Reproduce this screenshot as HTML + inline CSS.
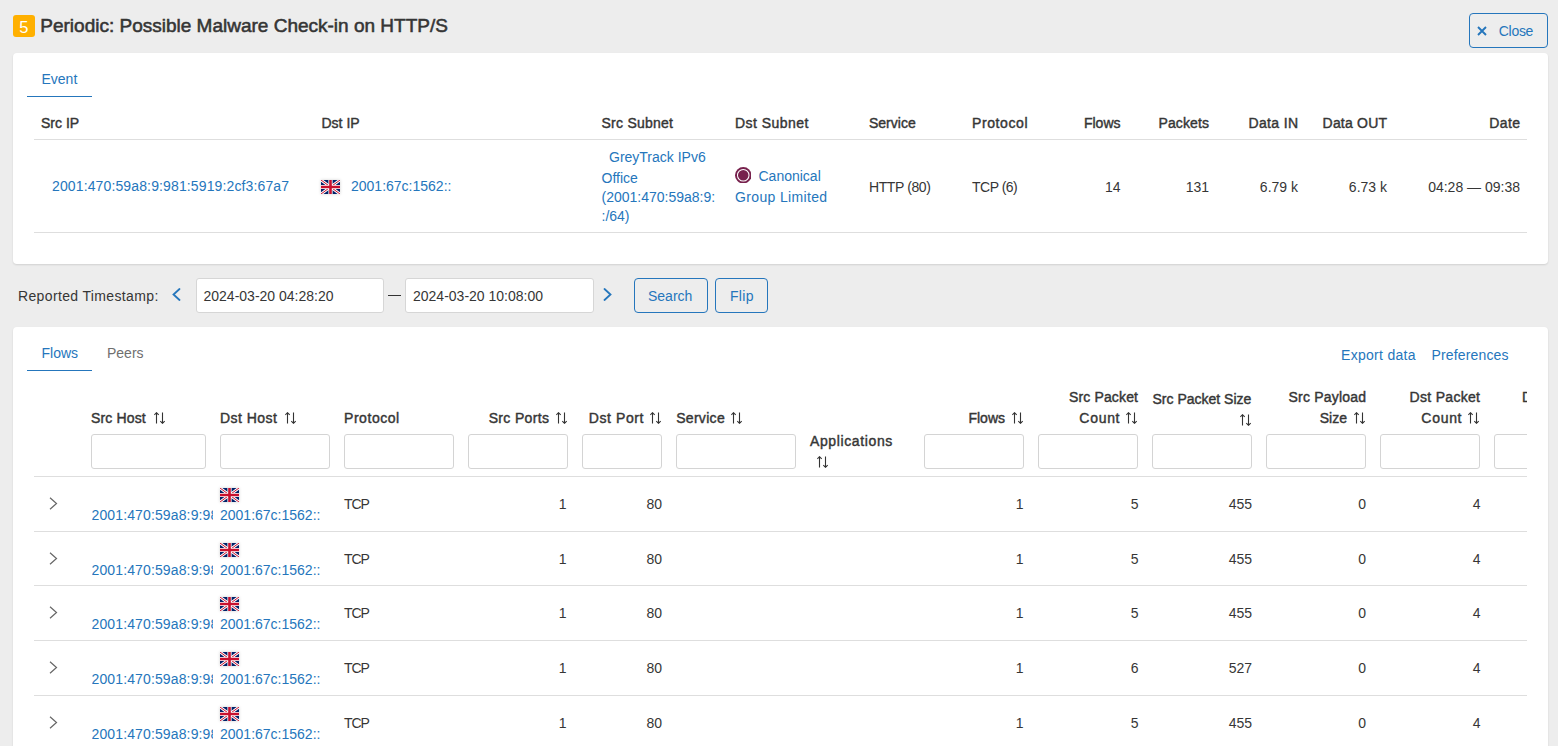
<!DOCTYPE html>
<html><head><meta charset="utf-8"><title>Event detail</title>
<style>
html,body{margin:0;padding:0;}
body{width:1558px;height:746px;overflow:hidden;position:relative;background:#ededed;font-family:"Liberation Sans",sans-serif;}
.t{position:absolute;white-space:nowrap;}
svg{display:block}
</style></head><body>
<div style="position:absolute;left:13px;top:15px;width:22px;height:22px;background:#ffb000;border-radius:3px;"></div>
<div class="t" style="top:16.18px;font-size:16.5px;line-height:22px;color:#fff;left:19.2px;">5</div>
<div class="t" style="top:14.32px;font-size:19px;line-height:24px;color:#353535;left:40.3px;-webkit-text-stroke:0.55px #353535;">Periodic: Possible Malware Check-in on HTTP/S</div>
<div style="position:absolute;left:1469px;top:13px;width:77px;height:33px;border:1px solid #2576bc;border-radius:4px;"></div>
<svg style="position:absolute;left:1477px;top:25.5px" width="10" height="10" viewBox="0 0 10 10"><path d="M1 1L9 9M9 1L1 9" stroke="#2576bc" stroke-width="1.9"/></svg>
<div class="t" style="top:21.15px;font-size:14px;line-height:20px;color:#2576bc;letter-spacing:-0.3px;left:1498.8px;">Close</div>
<div style="position:absolute;left:13px;top:53px;width:1535px;height:211px;background:#fff;border-radius:4px;box-shadow:0 1px 2px rgba(0,0,0,0.12);"></div>
<div class="t" style="top:69.15px;font-size:14px;line-height:20px;color:#2576bc;left:41.5px;">Event</div>
<div style="position:absolute;left:27px;top:95.5px;width:65px;height:1.6px;background:#2576bc;"></div>
<div class="t" style="top:113.15px;font-size:14px;line-height:20px;color:#363636;-webkit-text-stroke:0.42px #363636;left:41px;">Src IP</div>
<div class="t" style="top:113.15px;font-size:14px;line-height:20px;color:#363636;-webkit-text-stroke:0.42px #363636;left:321.5px;">Dst IP</div>
<div class="t" style="top:113.15px;font-size:14px;line-height:20px;color:#363636;-webkit-text-stroke:0.42px #363636;letter-spacing:0.25px;left:601.5px;">Src Subnet</div>
<div class="t" style="top:113.15px;font-size:14px;line-height:20px;color:#363636;-webkit-text-stroke:0.42px #363636;letter-spacing:0.45px;left:735px;">Dst Subnet</div>
<div class="t" style="top:113.15px;font-size:14px;line-height:20px;color:#363636;-webkit-text-stroke:0.42px #363636;left:869px;">Service</div>
<div class="t" style="top:113.15px;font-size:14px;line-height:20px;color:#363636;-webkit-text-stroke:0.42px #363636;letter-spacing:0.6px;left:972px;">Protocol</div>
<div class="t" style="top:113.15px;font-size:14px;line-height:20px;color:#363636;-webkit-text-stroke:0.42px #363636;right:437.5px;">Flows</div>
<div class="t" style="top:113.15px;font-size:14px;line-height:20px;color:#363636;-webkit-text-stroke:0.42px #363636;letter-spacing:0.12px;right:348.88px;">Packets</div>
<div class="t" style="top:113.15px;font-size:14px;line-height:20px;color:#363636;-webkit-text-stroke:0.42px #363636;letter-spacing:0.35px;right:259.65px;">Data IN</div>
<div class="t" style="top:113.15px;font-size:14px;line-height:20px;color:#363636;-webkit-text-stroke:0.42px #363636;letter-spacing:0.2px;right:170.8px;">Data OUT</div>
<div class="t" style="top:113.15px;font-size:14px;line-height:20px;color:#363636;-webkit-text-stroke:0.42px #363636;letter-spacing:0.4px;right:37.6px;">Date</div>
<div style="position:absolute;left:34px;top:139px;width:1493px;height:1px;background:#dedede;"></div>
<div class="t" style="top:175.95px;font-size:14px;line-height:20px;color:#2576bc;left:52px;letter-spacing:0.13px;">2001:470:59a8:9:981:5919:2cf3:67a7</div>
<div style="position:absolute;left:321px;top:180px;width:19px;height:14px;box-shadow:0 0 3px rgba(0,0,0,0.18);line-height:0"><svg width="19" height="14" viewBox="0 0 19 14"><rect width="19" height="14" fill="#012169"/><path d="M0 0L19 14M19 0L0 14" stroke="#fff" stroke-width="2.8"/><path d="M0 0L19 14M19 0L0 14" stroke="#C8102E" stroke-width="1"/><path d="M9.5 0V14M0 7H19" stroke="#fff" stroke-width="4.2"/><path d="M9.5 0V14M0 7H19" stroke="#C8102E" stroke-width="2.6"/></svg></div>
<div class="t" style="top:175.95px;font-size:14px;line-height:20px;color:#2576bc;left:351px;">2001:67c:1562::</div>
<div class="t" style="top:146.65px;font-size:14px;line-height:20px;color:#2576bc;left:609px;">GreyTrack IPv6</div>
<div class="t" style="top:167.65px;font-size:14px;line-height:20px;color:#2576bc;left:601.5px;">Office</div>
<div class="t" style="top:186.65px;font-size:14px;line-height:20px;color:#2576bc;left:601.5px;">(2001:470:59a8:9:</div>
<div class="t" style="top:205.65px;font-size:14px;line-height:20px;color:#2576bc;left:601.5px;">:/64)</div>
<svg style="position:absolute;left:734.5px;top:166.5px" width="16.5" height="16.5" viewBox="0 0 16 16"><circle cx="8" cy="8" r="8" fill="#77214d"/><circle cx="8" cy="8" r="5.6" fill="none" stroke="#fff" stroke-width="1"/></svg>
<div class="t" style="top:165.65px;font-size:14px;line-height:20px;color:#2576bc;left:758.5px;">Canonical</div>
<div class="t" style="top:186.65px;font-size:14px;line-height:20px;color:#2576bc;left:735px;letter-spacing:0.35px;">Group Limited</div>
<div class="t" style="top:176.95px;font-size:14px;line-height:20px;color:#363636;left:869px;letter-spacing:-0.4px;">HTTP (80)</div>
<div class="t" style="top:176.95px;font-size:14px;line-height:20px;color:#363636;left:972px;letter-spacing:-0.5px;">TCP (6)</div>
<div class="t" style="top:176.95px;font-size:14px;line-height:20px;color:#363636;right:437.5px;">14</div>
<div class="t" style="top:176.95px;font-size:14px;line-height:20px;color:#363636;right:349px;">131</div>
<div class="t" style="top:176.95px;font-size:14px;line-height:20px;color:#363636;right:260px;">6.79 k</div>
<div class="t" style="top:176.95px;font-size:14px;line-height:20px;color:#363636;right:171px;">6.73 k</div>
<div class="t" style="top:176.95px;font-size:14px;line-height:20px;color:#363636;right:38px;">04:28 — 09:38</div>
<div style="position:absolute;left:34px;top:232px;width:1493px;height:1px;background:#dedede;"></div>
<div class="t" style="top:285.95px;font-size:14px;line-height:20px;color:#363636;left:18px;letter-spacing:0.36px;">Reported Timestamp:</div>
<svg style="position:absolute;left:170.6px;top:287.7px" width="10" height="13" viewBox="0 0 10 13"><path d="M8.5 1L2.5 6.5L8.5 12" stroke="#2576bc" stroke-width="1.8" stroke-linecap="round" fill="none"/></svg>
<div style="position:absolute;left:196px;top:278px;width:186px;height:32.5px;background:#fff;border:1px solid #d6d6d6;border-radius:3px;"></div>
<div class="t" style="top:285.95px;font-size:14px;line-height:20px;color:#363636;left:203.5px;">2024-03-20 04:28:20</div>
<div style="position:absolute;left:388px;top:295px;width:13px;height:1.3px;background:#333;"></div>
<div style="position:absolute;left:405px;top:278px;width:187px;height:32.5px;background:#fff;border:1px solid #d6d6d6;border-radius:3px;"></div>
<div class="t" style="top:285.95px;font-size:14px;line-height:20px;color:#363636;left:413px;">2024-03-20 10:08:00</div>
<svg style="position:absolute;left:603.4px;top:287.7px" width="10" height="13" viewBox="0 0 10 13"><path d="M1.5 1L7.5 6.5L1.5 12" stroke="#2576bc" stroke-width="1.8" stroke-linecap="round" fill="none"/></svg>
<div style="position:absolute;left:634px;top:278px;width:72px;height:32.5px;border:1px solid #2576bc;border-radius:4px;"></div>
<div class="t" style="top:285.95px;font-size:14px;line-height:20px;color:#2576bc;left:648px;">Search</div>
<div style="position:absolute;left:715px;top:278px;width:51px;height:32.5px;border:1px solid #2576bc;border-radius:4px;"></div>
<div class="t" style="top:285.95px;font-size:14px;line-height:20px;color:#2576bc;left:730px;letter-spacing:0.3px;">Flip</div>
<div style="position:absolute;left:13px;top:327px;width:1535px;height:440px;background:#fff;border-radius:4px;box-shadow:0 1px 2px rgba(0,0,0,0.12);"></div>
<div class="t" style="top:342.85px;font-size:14px;line-height:20px;color:#2576bc;left:41.5px;">Flows</div>
<div class="t" style="top:342.85px;font-size:14px;line-height:20px;color:#6f6f6f;left:107px;">Peers</div>
<div style="position:absolute;left:27px;top:369.6px;width:65px;height:1.6px;background:#2576bc;"></div>
<div class="t" style="top:345.15px;font-size:14px;line-height:20px;color:#2576bc;left:1341px;letter-spacing:0.3px;">Export data</div>
<div class="t" style="top:345.15px;font-size:14px;line-height:20px;color:#2576bc;left:1431.5px;letter-spacing:0.15px;">Preferences</div>
<div style="position:absolute;left:0;top:0;width:1558px;height:746px;clip-path:inset(0 31px 0 0)">
<div class="t" style="top:408.15px;font-size:14px;line-height:20px;color:#363636;-webkit-text-stroke:0.42px #363636;letter-spacing:0.15px;left:91px;">Src Host</div>
<svg style="position:absolute;left:153.9px;top:412.0px" width="12" height="12" viewBox="0 0 12 12"><path d="M2.5 11.6V0.7M0.3 2.9L2.5 0.7L4.7 2.9M8.5 0.4V11.3M6.3 9.1L8.5 11.3L10.7 9.1" stroke="#333" stroke-width="1.1" fill="none"/></svg>
<div style="position:absolute;left:91px;top:434px;width:113px;height:33px;background:#fff;border:1px solid #d4d4d4;border-radius:3px;"></div>
<div class="t" style="top:408.15px;font-size:14px;line-height:20px;color:#363636;-webkit-text-stroke:0.42px #363636;letter-spacing:0.45px;left:220px;">Dst Host</div>
<svg style="position:absolute;left:284.9px;top:412.0px" width="12" height="12" viewBox="0 0 12 12"><path d="M2.5 11.6V0.7M0.3 2.9L2.5 0.7L4.7 2.9M8.5 0.4V11.3M6.3 9.1L8.5 11.3L10.7 9.1" stroke="#333" stroke-width="1.1" fill="none"/></svg>
<div style="position:absolute;left:220px;top:434px;width:108px;height:33px;background:#fff;border:1px solid #d4d4d4;border-radius:3px;"></div>
<div class="t" style="top:408.15px;font-size:14px;line-height:20px;color:#363636;-webkit-text-stroke:0.42px #363636;letter-spacing:0.55px;left:344px;">Protocol</div>
<div style="position:absolute;left:344px;top:434px;width:108px;height:33px;background:#fff;border:1px solid #d4d4d4;border-radius:3px;"></div>
<div class="t" style="top:408.15px;font-size:14px;line-height:20px;color:#363636;-webkit-text-stroke:0.42px #363636;letter-spacing:0.35px;right:1008.65px;">Src Ports</div>
<svg style="position:absolute;left:555.9px;top:412.0px" width="12" height="12" viewBox="0 0 12 12"><path d="M2.5 11.6V0.7M0.3 2.9L2.5 0.7L4.7 2.9M8.5 0.4V11.3M6.3 9.1L8.5 11.3L10.7 9.1" stroke="#333" stroke-width="1.1" fill="none"/></svg>
<div style="position:absolute;left:468px;top:434px;width:98px;height:33px;background:#fff;border:1px solid #d4d4d4;border-radius:3px;"></div>
<div class="t" style="top:408.15px;font-size:14px;line-height:20px;color:#363636;-webkit-text-stroke:0.42px #363636;letter-spacing:0.6px;right:913.9px;">Dst Port</div>
<svg style="position:absolute;left:650.4px;top:412.0px" width="12" height="12" viewBox="0 0 12 12"><path d="M2.5 11.6V0.7M0.3 2.9L2.5 0.7L4.7 2.9M8.5 0.4V11.3M6.3 9.1L8.5 11.3L10.7 9.1" stroke="#333" stroke-width="1.1" fill="none"/></svg>
<div style="position:absolute;left:582px;top:434px;width:78px;height:33px;background:#fff;border:1px solid #d4d4d4;border-radius:3px;"></div>
<div class="t" style="top:408.15px;font-size:14px;line-height:20px;color:#363636;-webkit-text-stroke:0.42px #363636;letter-spacing:0.3px;left:676.2px;">Service</div>
<svg style="position:absolute;left:731.0px;top:412.0px" width="12" height="12" viewBox="0 0 12 12"><path d="M2.5 11.6V0.7M0.3 2.9L2.5 0.7L4.7 2.9M8.5 0.4V11.3M6.3 9.1L8.5 11.3L10.7 9.1" stroke="#333" stroke-width="1.1" fill="none"/></svg>
<div style="position:absolute;left:676px;top:434px;width:118px;height:33px;background:#fff;border:1px solid #d4d4d4;border-radius:3px;"></div>
<div class="t" style="top:431.15px;font-size:14px;line-height:20px;color:#363636;-webkit-text-stroke:0.42px #363636;letter-spacing:0.62px;left:810px;">Applications</div>
<svg style="position:absolute;left:816.9px;top:456.0px" width="12" height="12" viewBox="0 0 12 12"><path d="M2.5 11.6V0.7M0.3 2.9L2.5 0.7L4.7 2.9M8.5 0.4V11.3M6.3 9.1L8.5 11.3L10.7 9.1" stroke="#333" stroke-width="1.1" fill="none"/></svg>
<div class="t" style="top:408.15px;font-size:14px;line-height:20px;color:#363636;-webkit-text-stroke:0.42px #363636;right:553px;">Flows</div>
<svg style="position:absolute;left:1011.9px;top:412.0px" width="12" height="12" viewBox="0 0 12 12"><path d="M2.5 11.6V0.7M0.3 2.9L2.5 0.7L4.7 2.9M8.5 0.4V11.3M6.3 9.1L8.5 11.3L10.7 9.1" stroke="#333" stroke-width="1.1" fill="none"/></svg>
<div style="position:absolute;left:924px;top:434px;width:98px;height:33px;background:#fff;border:1px solid #d4d4d4;border-radius:3px;"></div>
<div class="t" style="top:387.15px;font-size:14px;line-height:20px;color:#363636;-webkit-text-stroke:0.42px #363636;letter-spacing:0.15px;right:419.85px;">Src Packet</div>
<div class="t" style="top:408.15px;font-size:14px;line-height:20px;color:#363636;-webkit-text-stroke:0.42px #363636;letter-spacing:0.7px;right:437.8px;">Count</div>
<svg style="position:absolute;left:1126.4px;top:412.0px" width="12" height="12" viewBox="0 0 12 12"><path d="M2.5 11.6V0.7M0.3 2.9L2.5 0.7L4.7 2.9M8.5 0.4V11.3M6.3 9.1L8.5 11.3L10.7 9.1" stroke="#333" stroke-width="1.1" fill="none"/></svg>
<div style="position:absolute;left:1038px;top:434px;width:98px;height:33px;background:#fff;border:1px solid #d4d4d4;border-radius:3px;"></div>
<div class="t" style="top:389.15px;font-size:14px;line-height:20px;color:#363636;-webkit-text-stroke:0.42px #363636;left:1152.5px;">Src Packet Size</div>
<svg style="position:absolute;left:1239.9px;top:414.0px" width="12" height="12" viewBox="0 0 12 12"><path d="M2.5 11.6V0.7M0.3 2.9L2.5 0.7L4.7 2.9M8.5 0.4V11.3M6.3 9.1L8.5 11.3L10.7 9.1" stroke="#333" stroke-width="1.1" fill="none"/></svg>
<div style="position:absolute;left:1152px;top:434px;width:98px;height:33px;background:#fff;border:1px solid #d4d4d4;border-radius:3px;"></div>
<div class="t" style="top:387.15px;font-size:14px;line-height:20px;color:#363636;-webkit-text-stroke:0.42px #363636;letter-spacing:0.2px;right:191.8px;">Src Payload</div>
<div class="t" style="top:408.15px;font-size:14px;line-height:20px;color:#363636;-webkit-text-stroke:0.42px #363636;right:211px;">Size</div>
<svg style="position:absolute;left:1353.9px;top:412.0px" width="12" height="12" viewBox="0 0 12 12"><path d="M2.5 11.6V0.7M0.3 2.9L2.5 0.7L4.7 2.9M8.5 0.4V11.3M6.3 9.1L8.5 11.3L10.7 9.1" stroke="#333" stroke-width="1.1" fill="none"/></svg>
<div style="position:absolute;left:1266px;top:434px;width:98px;height:33px;background:#fff;border:1px solid #d4d4d4;border-radius:3px;"></div>
<div class="t" style="top:387.15px;font-size:14px;line-height:20px;color:#363636;-webkit-text-stroke:0.42px #363636;letter-spacing:0.3px;right:77.7px;">Dst Packet</div>
<div class="t" style="top:408.15px;font-size:14px;line-height:20px;color:#363636;-webkit-text-stroke:0.42px #363636;letter-spacing:0.7px;right:95.8px;">Count</div>
<svg style="position:absolute;left:1468.4px;top:412.0px" width="12" height="12" viewBox="0 0 12 12"><path d="M2.5 11.6V0.7M0.3 2.9L2.5 0.7L4.7 2.9M8.5 0.4V11.3M6.3 9.1L8.5 11.3L10.7 9.1" stroke="#333" stroke-width="1.1" fill="none"/></svg>
<div style="position:absolute;left:1380px;top:434px;width:98px;height:33px;background:#fff;border:1px solid #d4d4d4;border-radius:3px;"></div>
<div class="t" style="top:387.15px;font-size:14px;line-height:20px;color:#363636;-webkit-text-stroke:0.42px #363636;left:1522px;">Dst Payload</div>
<div style="position:absolute;left:1494px;top:434px;width:98px;height:33px;background:#fff;border:1px solid #d4d4d4;border-radius:3px;"></div>
<div style="position:absolute;left:34px;top:476px;width:1600px;height:1px;background:#dedede;"></div>
<svg style="position:absolute;left:49px;top:497.4px" width="9" height="13" viewBox="0 0 9 13"><path d="M1 0.8L7.5 6.5L1 12.2" stroke="#666" stroke-width="1.2" fill="none"/></svg>
<div style="position:absolute;left:220px;top:487.6px;width:19px;height:14px;box-shadow:0 0 3px rgba(0,0,0,0.18);line-height:0"><svg width="19" height="14" viewBox="0 0 19 14"><rect width="19" height="14" fill="#012169"/><path d="M0 0L19 14M19 0L0 14" stroke="#fff" stroke-width="2.8"/><path d="M0 0L19 14M19 0L0 14" stroke="#C8102E" stroke-width="1"/><path d="M9.5 0V14M0 7H19" stroke="#fff" stroke-width="4.2"/><path d="M9.5 0V14M0 7H19" stroke="#C8102E" stroke-width="2.6"/></svg></div>
<div class="t" style="left:91.5px;top:504.75px;width:121.5px;overflow:hidden;color:#2576bc;font-size:14px;line-height:20px;letter-spacing:0.13px">2001:470:59a8:9:981:5919:2cf3:67a7</div>
<div class="t" style="top:504.75px;font-size:14px;line-height:20px;color:#2576bc;left:220px;">2001:67c:1562::</div>
<div class="t" style="top:494.35px;font-size:14px;line-height:20px;color:#363636;left:344px;letter-spacing:-1.1px;">TCP</div>
<div class="t" style="top:494.35px;font-size:14px;line-height:20px;color:#363636;right:991.5px;">1</div>
<div class="t" style="top:494.35px;font-size:14px;line-height:20px;color:#363636;right:896px;">80</div>
<div class="t" style="top:494.35px;font-size:14px;line-height:20px;color:#363636;right:534.5px;">1</div>
<div class="t" style="top:494.35px;font-size:14px;line-height:20px;color:#363636;right:419.5px;">5</div>
<div class="t" style="top:494.35px;font-size:14px;line-height:20px;color:#363636;right:306px;">455</div>
<div class="t" style="top:494.35px;font-size:14px;line-height:20px;color:#363636;right:192px;">0</div>
<div class="t" style="top:494.35px;font-size:14px;line-height:20px;color:#363636;right:77.5px;">4</div>
<div style="position:absolute;left:34px;top:531px;width:1600px;height:1px;background:#dedede;"></div>
<svg style="position:absolute;left:49px;top:552.4px" width="9" height="13" viewBox="0 0 9 13"><path d="M1 0.8L7.5 6.5L1 12.2" stroke="#666" stroke-width="1.2" fill="none"/></svg>
<div style="position:absolute;left:220px;top:542.6px;width:19px;height:14px;box-shadow:0 0 3px rgba(0,0,0,0.18);line-height:0"><svg width="19" height="14" viewBox="0 0 19 14"><rect width="19" height="14" fill="#012169"/><path d="M0 0L19 14M19 0L0 14" stroke="#fff" stroke-width="2.8"/><path d="M0 0L19 14M19 0L0 14" stroke="#C8102E" stroke-width="1"/><path d="M9.5 0V14M0 7H19" stroke="#fff" stroke-width="4.2"/><path d="M9.5 0V14M0 7H19" stroke="#C8102E" stroke-width="2.6"/></svg></div>
<div class="t" style="left:91.5px;top:559.75px;width:121.5px;overflow:hidden;color:#2576bc;font-size:14px;line-height:20px;letter-spacing:0.13px">2001:470:59a8:9:981:5919:2cf3:67a7</div>
<div class="t" style="top:559.75px;font-size:14px;line-height:20px;color:#2576bc;left:220px;">2001:67c:1562::</div>
<div class="t" style="top:549.35px;font-size:14px;line-height:20px;color:#363636;left:344px;letter-spacing:-1.1px;">TCP</div>
<div class="t" style="top:549.35px;font-size:14px;line-height:20px;color:#363636;right:991.5px;">1</div>
<div class="t" style="top:549.35px;font-size:14px;line-height:20px;color:#363636;right:896px;">80</div>
<div class="t" style="top:549.35px;font-size:14px;line-height:20px;color:#363636;right:534.5px;">1</div>
<div class="t" style="top:549.35px;font-size:14px;line-height:20px;color:#363636;right:419.5px;">5</div>
<div class="t" style="top:549.35px;font-size:14px;line-height:20px;color:#363636;right:306px;">455</div>
<div class="t" style="top:549.35px;font-size:14px;line-height:20px;color:#363636;right:192px;">0</div>
<div class="t" style="top:549.35px;font-size:14px;line-height:20px;color:#363636;right:77.5px;">4</div>
<div style="position:absolute;left:34px;top:585px;width:1600px;height:1px;background:#dedede;"></div>
<svg style="position:absolute;left:49px;top:606.4px" width="9" height="13" viewBox="0 0 9 13"><path d="M1 0.8L7.5 6.5L1 12.2" stroke="#666" stroke-width="1.2" fill="none"/></svg>
<div style="position:absolute;left:220px;top:596.6px;width:19px;height:14px;box-shadow:0 0 3px rgba(0,0,0,0.18);line-height:0"><svg width="19" height="14" viewBox="0 0 19 14"><rect width="19" height="14" fill="#012169"/><path d="M0 0L19 14M19 0L0 14" stroke="#fff" stroke-width="2.8"/><path d="M0 0L19 14M19 0L0 14" stroke="#C8102E" stroke-width="1"/><path d="M9.5 0V14M0 7H19" stroke="#fff" stroke-width="4.2"/><path d="M9.5 0V14M0 7H19" stroke="#C8102E" stroke-width="2.6"/></svg></div>
<div class="t" style="left:91.5px;top:613.75px;width:121.5px;overflow:hidden;color:#2576bc;font-size:14px;line-height:20px;letter-spacing:0.13px">2001:470:59a8:9:981:5919:2cf3:67a7</div>
<div class="t" style="top:613.75px;font-size:14px;line-height:20px;color:#2576bc;left:220px;">2001:67c:1562::</div>
<div class="t" style="top:603.35px;font-size:14px;line-height:20px;color:#363636;left:344px;letter-spacing:-1.1px;">TCP</div>
<div class="t" style="top:603.35px;font-size:14px;line-height:20px;color:#363636;right:991.5px;">1</div>
<div class="t" style="top:603.35px;font-size:14px;line-height:20px;color:#363636;right:896px;">80</div>
<div class="t" style="top:603.35px;font-size:14px;line-height:20px;color:#363636;right:534.5px;">1</div>
<div class="t" style="top:603.35px;font-size:14px;line-height:20px;color:#363636;right:419.5px;">5</div>
<div class="t" style="top:603.35px;font-size:14px;line-height:20px;color:#363636;right:306px;">455</div>
<div class="t" style="top:603.35px;font-size:14px;line-height:20px;color:#363636;right:192px;">0</div>
<div class="t" style="top:603.35px;font-size:14px;line-height:20px;color:#363636;right:77.5px;">4</div>
<div style="position:absolute;left:34px;top:640px;width:1600px;height:1px;background:#dedede;"></div>
<svg style="position:absolute;left:49px;top:661.4px" width="9" height="13" viewBox="0 0 9 13"><path d="M1 0.8L7.5 6.5L1 12.2" stroke="#666" stroke-width="1.2" fill="none"/></svg>
<div style="position:absolute;left:220px;top:651.6px;width:19px;height:14px;box-shadow:0 0 3px rgba(0,0,0,0.18);line-height:0"><svg width="19" height="14" viewBox="0 0 19 14"><rect width="19" height="14" fill="#012169"/><path d="M0 0L19 14M19 0L0 14" stroke="#fff" stroke-width="2.8"/><path d="M0 0L19 14M19 0L0 14" stroke="#C8102E" stroke-width="1"/><path d="M9.5 0V14M0 7H19" stroke="#fff" stroke-width="4.2"/><path d="M9.5 0V14M0 7H19" stroke="#C8102E" stroke-width="2.6"/></svg></div>
<div class="t" style="left:91.5px;top:668.75px;width:121.5px;overflow:hidden;color:#2576bc;font-size:14px;line-height:20px;letter-spacing:0.13px">2001:470:59a8:9:981:5919:2cf3:67a7</div>
<div class="t" style="top:668.75px;font-size:14px;line-height:20px;color:#2576bc;left:220px;">2001:67c:1562::</div>
<div class="t" style="top:658.35px;font-size:14px;line-height:20px;color:#363636;left:344px;letter-spacing:-1.1px;">TCP</div>
<div class="t" style="top:658.35px;font-size:14px;line-height:20px;color:#363636;right:991.5px;">1</div>
<div class="t" style="top:658.35px;font-size:14px;line-height:20px;color:#363636;right:896px;">80</div>
<div class="t" style="top:658.35px;font-size:14px;line-height:20px;color:#363636;right:534.5px;">1</div>
<div class="t" style="top:658.35px;font-size:14px;line-height:20px;color:#363636;right:419.5px;">6</div>
<div class="t" style="top:658.35px;font-size:14px;line-height:20px;color:#363636;right:306px;">527</div>
<div class="t" style="top:658.35px;font-size:14px;line-height:20px;color:#363636;right:192px;">0</div>
<div class="t" style="top:658.35px;font-size:14px;line-height:20px;color:#363636;right:77.5px;">4</div>
<div style="position:absolute;left:34px;top:695px;width:1600px;height:1px;background:#dedede;"></div>
<svg style="position:absolute;left:49px;top:716.4px" width="9" height="13" viewBox="0 0 9 13"><path d="M1 0.8L7.5 6.5L1 12.2" stroke="#666" stroke-width="1.2" fill="none"/></svg>
<div style="position:absolute;left:220px;top:706.6px;width:19px;height:14px;box-shadow:0 0 3px rgba(0,0,0,0.18);line-height:0"><svg width="19" height="14" viewBox="0 0 19 14"><rect width="19" height="14" fill="#012169"/><path d="M0 0L19 14M19 0L0 14" stroke="#fff" stroke-width="2.8"/><path d="M0 0L19 14M19 0L0 14" stroke="#C8102E" stroke-width="1"/><path d="M9.5 0V14M0 7H19" stroke="#fff" stroke-width="4.2"/><path d="M9.5 0V14M0 7H19" stroke="#C8102E" stroke-width="2.6"/></svg></div>
<div class="t" style="left:91.5px;top:723.75px;width:121.5px;overflow:hidden;color:#2576bc;font-size:14px;line-height:20px;letter-spacing:0.13px">2001:470:59a8:9:981:5919:2cf3:67a7</div>
<div class="t" style="top:723.75px;font-size:14px;line-height:20px;color:#2576bc;left:220px;">2001:67c:1562::</div>
<div class="t" style="top:713.35px;font-size:14px;line-height:20px;color:#363636;left:344px;letter-spacing:-1.1px;">TCP</div>
<div class="t" style="top:713.35px;font-size:14px;line-height:20px;color:#363636;right:991.5px;">1</div>
<div class="t" style="top:713.35px;font-size:14px;line-height:20px;color:#363636;right:896px;">80</div>
<div class="t" style="top:713.35px;font-size:14px;line-height:20px;color:#363636;right:534.5px;">1</div>
<div class="t" style="top:713.35px;font-size:14px;line-height:20px;color:#363636;right:419.5px;">5</div>
<div class="t" style="top:713.35px;font-size:14px;line-height:20px;color:#363636;right:306px;">455</div>
<div class="t" style="top:713.35px;font-size:14px;line-height:20px;color:#363636;right:192px;">0</div>
<div class="t" style="top:713.35px;font-size:14px;line-height:20px;color:#363636;right:77.5px;">4</div>
<div style="position:absolute;left:34px;top:750px;width:1600px;height:1px;background:#dedede;"></div>
</div>
</body></html>
